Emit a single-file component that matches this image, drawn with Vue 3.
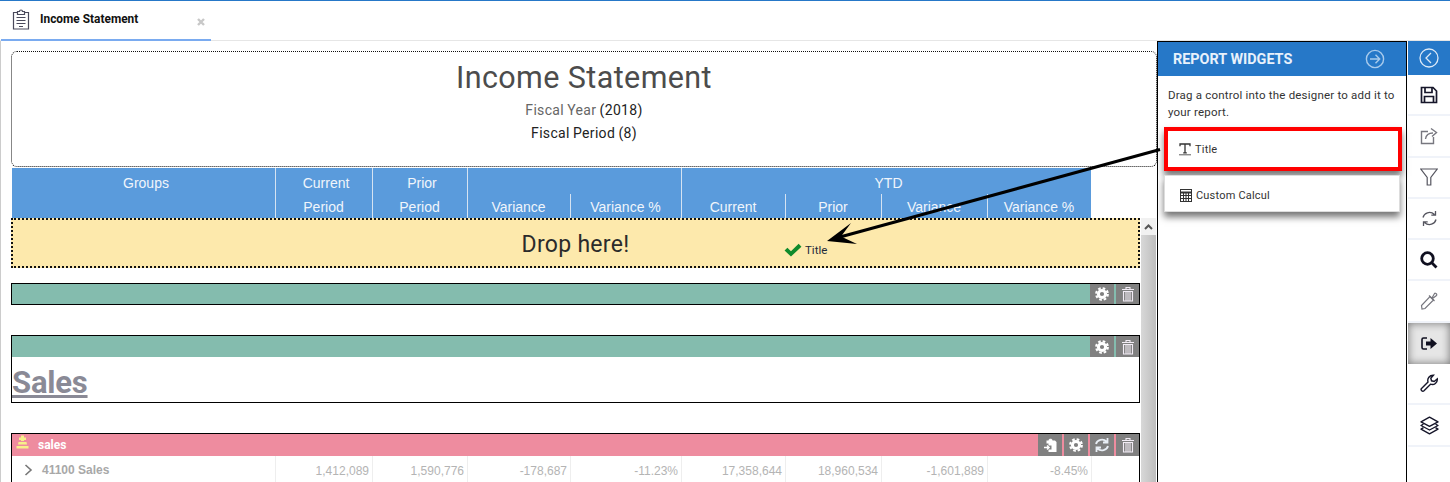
<template>
  <div class="page">
    <div class="tabbar">
      <div class="tab">
        <svg class="tab-icon" width="18" height="21" viewBox="0 0 18 21" fill="none" stroke="#4a4a5c" stroke-width="1.2">
          <path d="M5.5 3.5H1.5V20H16.5V3.5H12.5" />
          <path d="M5.5 5.5V2.5H7.5C7.5 0.5 10.5 0.5 10.5 2.5H12.5V5.5Z" />
          <path d="M4.5 8.5H13.5M4.5 11.5H13.5M4.5 14.5H13.5M7 17.5H11" />
        </svg>
        <span class="tab-name">Income Statement</span>
        <svg class="tab-close" width="8" height="8" viewBox="0 0 8 8" fill="none" stroke="#c8c8c8" stroke-width="2.4">
          <path d="M1 1L7 7M7 1L1 7" />
        </svg>
      </div>
    </div>

    <div class="body">
      <div class="canvas">
        <div class="title-box">
          <div class="title-main">Income Statement</div>
          <div class="title-sub"><span class="muted">Fiscal Year</span> (2018)</div>
          <div class="title-sub">Fiscal Period (8)</div>
        </div>

        <div class="grid head">
          <div class="head-top first">Groups</div>
          <div class="head-top">Current</div>
          <div class="head-top">Prior</div>
          <div class="head-top wide"></div>
          <div class="head-top ytd">YTD</div>
          <div class="head-sub first"></div>
          <div v-for="c in subCols" :key="c.id" class="head-sub">{{ c.label }}</div>
        </div>

        <div class="work">
          <div class="work-main">
            <div class="drop">Drop here!</div>

            <div class="section first-bar">
              <div class="bar green">
                <div class="actions">
                  <button class="act"><svg width="16" height="16" viewBox="0 0 16 16"><use href="#gear" /></svg></button>
                  <button class="act"><svg width="16" height="16" viewBox="0 0 16 16"><use href="#trash" /></svg></button>
                </div>
              </div>
            </div>

            <div class="section title-sec">
              <div class="bar green">
                <div class="actions">
                  <button class="act"><svg width="16" height="16" viewBox="0 0 16 16"><use href="#gear" /></svg></button>
                  <button class="act"><svg width="16" height="16" viewBox="0 0 16 16"><use href="#trash" /></svg></button>
                </div>
              </div>
              <div class="sales-title">Sales</div>
            </div>

            <div class="section group-sec">
              <div class="bar pink">
                <svg class="crown" width="13" height="14" viewBox="0 0 13 14" fill="#f7f08a">
                  <path d="M5 0.5H8V2.5H10V5H8V6H5V5H3V2.5H5Z" />
                  <path d="M2.5 7H10.5L11 9.5H2Z" />
                  <path d="M0.5 11H12.5V13.5H0.5Z" />
                </svg>
                <span class="bar-name">sales</span>
                <div class="actions">
                  <button class="act"><svg width="16" height="16" viewBox="0 0 16 16"><use href="#clip" /></svg></button>
                  <button class="act"><svg width="16" height="16" viewBox="0 0 16 16"><use href="#gear" /></svg></button>
                  <button class="act"><svg width="16" height="16" viewBox="0 0 16 16"><use href="#sync" /></svg></button>
                  <button class="act"><svg width="16" height="16" viewBox="0 0 16 16"><use href="#trash" /></svg></button>
                </div>
              </div>
              <div class="grid row">
                <div class="cell name">
                  <svg width="9" height="12" viewBox="0 0 9 12" fill="none" stroke="#777" stroke-width="1.6"><path d="M1.5 1L7 6L1.5 11" /></svg>
                  41100 Sales
                </div>
                <div v-for="v in rowValues" :key="v" class="cell num">{{ v }}</div>
              </div>
            </div>
          </div>

          <div class="scrollbar">
            <div class="scroll-up">
              <svg width="9" height="6" viewBox="0 0 9 6" fill="none" stroke="#555" stroke-width="2"><path d="M1 5L4.5 1.5L8 5" /></svg>
            </div>
            <div class="scroll-thumb"></div>
          </div>
        </div>
      </div>

      <div class="panel">
        <div class="panel-head">
          <span>REPORT WIDGETS</span>
          <svg width="20" height="20" viewBox="0 0 20 20" fill="none" stroke="#a9cbec" stroke-width="1.4">
            <circle cx="10" cy="10" r="8.6" />
            <path d="M5 10H14.5M10.5 5.8L14.7 10L10.5 14.2" />
          </svg>
        </div>
        <p class="panel-text">Drag a control into the designer to add it to your report.</p>
        <div class="widget selected">
          <svg width="12" height="13" viewBox="0 0 12 13" fill="none" stroke="#333" stroke-width="1.3">
            <path d="M1 3.2V1H11V3.2M6 1V9.8M4.2 9.8H7.8" />
            <path d="M0 11.8H12" stroke-width="0.8" />
          </svg>
          Title
        </div>
        <div class="widget calc">
          <svg width="12" height="13" viewBox="0 0 12 13" fill="none" stroke="#333" stroke-width="1">
            <rect x="0.5" y="0.5" width="11" height="12" />
            <path d="M0.5 3.5H11.5" stroke-width="2" />
            <path d="M0.5 6.5H11.5M0.5 9.5H11.5M3.5 4V12.5M6 4V12.5M8.5 4V12.5" />
          </svg>
          Custom Calcul
        </div>
      </div>

      <div class="rail">
        <div class="rail-top">
          <svg width="20" height="20" viewBox="0 0 20 20" fill="none" stroke="#dce9f7" stroke-width="1.3">
            <circle cx="10" cy="10" r="9" />
            <path d="M12 5L7 10L12 15" />
          </svg>
        </div>
        <div class="rail-item">
          <svg width="18" height="18" viewBox="0 0 18 18" fill="none" stroke="#16162a" stroke-width="1.7">
            <path d="M1.5 1.5H13L16.5 5V16.5H1.5Z" />
            <path d="M5 1.5V6.5H12V1.5M4.5 16.5V10.5H13.5V16.5" />
          </svg>
        </div>
        <div class="rail-item">
          <svg width="18" height="18" viewBox="0 0 18 18" fill="none" stroke="#77777f" stroke-width="1.4">
            <path d="M8 4.5H1.5V16.5H13.5V10" />
            <path d="M5.5 12C6 8 9 6 13 6M11 1.5L16.5 5.5L12 9.5" />
          </svg>
        </div>
        <div class="rail-item">
          <svg width="18" height="18" viewBox="0 0 18 18" fill="none" stroke="#55555f" stroke-width="1.2">
            <path d="M0.8 1H17.2L10.8 9.5V17H7.2V9.5Z" />
          </svg>
        </div>
        <div class="rail-item">
          <svg width="17" height="17" viewBox="0 0 17 17" fill="none" stroke="#55555f" stroke-width="1.3">
            <path d="M2 7.5C3 3 9 0.5 13.5 4.5M14.5 1V5.2H10.3" />
            <path d="M15 9.5C14 14 8 16.5 3.5 12.5M2.5 16V11.8H6.7" />
          </svg>
        </div>
        <div class="rail-item">
          <svg width="18" height="18" viewBox="0 0 18 18" fill="none" stroke="#101020" stroke-width="2.8">
            <circle cx="7.5" cy="7.5" r="5.8" />
            <path d="M11.8 11.8L16.5 16.5" />
          </svg>
        </div>
        <div class="rail-item">
          <svg width="18" height="18" viewBox="0 0 18 18" fill="none" stroke="#77777f" stroke-width="1.2">
            <path d="M10 4.5L13.5 8L5 16.5L2 17L1.5 13.5Z" />
            <path d="M9 3.5L14.5 9M12 6L14.5 1.5C15.5 0.5 17.5 2.5 16.5 3.5L12.5 6.5" />
          </svg>
        </div>
        <div class="rail-item active">
          <svg width="17" height="13" viewBox="0 0 17 13">
            <path d="M6 1H2.5C1.5 1 1 1.5 1 2.5V10.5C1 11.5 1.5 12 2.5 12H6" fill="none" stroke="#101020" stroke-width="1.6" />
            <path d="M5 4.5H9.5V1L16 6.5L9.5 12V8.5H5Z" fill="#101020" />
          </svg>
        </div>
        <div class="rail-item">
          <svg width="19" height="19" viewBox="0 0 19 19" fill="none" stroke="#16162a" stroke-width="1.4">
            <path d="M1.5 14.5L8 8C7 4.5 9.5 1 13.5 1.2L10.8 4.2L11.5 6.8L14.2 7.5L17.3 4.8C17.8 8.8 14 11.5 10.5 10.2L4 16.8C2.5 18.2 0.2 16 1.5 14.5Z" />
          </svg>
        </div>
        <div class="rail-item">
          <svg width="19" height="19" viewBox="0 0 19 19" fill="none" stroke="#16162a" stroke-width="1.4" stroke-linejoin="round">
            <path d="M9.5 1.2L18 5.8L9.5 10.4L1 5.8Z" />
            <path d="M3.5 8L1 9.5L9.5 14L18 9.5L15.5 8" />
            <path d="M3.5 11.7L1 13.2L9.5 17.8L18 13.2L15.5 11.7" />
          </svg>
        </div>
      </div>
    </div>

    <!-- drag ghost and arrow, drawn over the page -->
    <div class="ghost">
      <svg width="18" height="14" viewBox="0 0 16 12" fill="#0f8a2c"><path d="M0.5 6.5L3 4L6.2 7L13 0.5L15.5 3L6.2 11.8Z" /></svg>
      <span>Title</span>
    </div>
    <svg class="arrow" width="1450" height="482" viewBox="0 0 1450 482">
      <path d="M1160 149.5L840 237" stroke="#000" stroke-width="3" fill="none" />
      <path d="M827 241L851 223L841 236.5L857 244Z" fill="#000" />
    </svg>

    <svg width="0" height="0" class="defs">
      <defs>
        <g id="gear" fill="none" stroke="#fff">
          <circle cx="8" cy="8" r="3.6" stroke-width="3" />
          <circle cx="8" cy="8" r="5.8" stroke-width="2.2" stroke-dasharray="2.6 1.95" />
        </g>
        <g id="trash" fill="none" stroke="#f2ecf5" stroke-width="1.1">
          <path d="M2 3.5H14M6 3.5V1.5H10V3.5" />
          <path d="M3.5 5.5H12.5V15H3.5Z" />
          <path d="M6 6V15M8 6V15M10 6V15" />
        </g>
        <g id="sync" fill="none" stroke="#e8eef5" stroke-width="1.8">
          <path d="M2 7C3 3 9 1 12.5 4.5M13.5 1V5.5H9" />
          <path d="M14 9C13 13 7 15 3.5 11.5M2.5 15V10.5H7" />
        </g>
        <g id="clip">
          <path d="M4.5 3.5H6.5C6.5 1 10.5 1 10.5 3.5H13L14.5 5V15H6.5V12.5H9.5V8.5H6.5V6.5H4.5Z" fill="#fff" />
          <path d="M2 10.5H6.5M5 8.5L7.2 10.5L5 12.5" fill="none" stroke="#fff" stroke-width="1.3" />
        </g>
      </defs>
    </svg>
  </div>
</template>

<script setup>
const subCols = [
  { id: 'p1', label: 'Period' },
  { id: 'p2', label: 'Period' },
  { id: 'v1', label: 'Variance' },
  { id: 'vp1', label: 'Variance %' },
  { id: 'c2', label: 'Current' },
  { id: 'p3', label: 'Prior' },
  { id: 'v2', label: 'Variance' },
  { id: 'vp2', label: 'Variance %' }
]

const rowValues = [
  '1,412,089',
  '1,590,776',
  '-178,687',
  '-11.23%',
  '17,358,644',
  '18,960,534',
  '-1,601,889',
  '-8.45%'
]
</script>

<style>
html,
body {
  margin: 0;
  background: #fff;
}
</style>

<style scoped>
.page {
  position: relative;
  width: 1450px;
  height: 482px;
  overflow: hidden;
  background: #fff;
  font-family: Roboto, sans-serif;
  color: #333;
}

.tabbar {
  height: 41px;
  box-sizing: border-box;
  border-top: 1px solid #2678c8;
  border-bottom: 1px solid #e6e6e6;
}

.tab {
  width: 210px;
  height: 40px;
  margin-left: 1px;
  box-sizing: border-box;
  border-bottom: 2px solid #7aabf0;
  display: flex;
  align-items: flex-start;
  padding: 8px 0 0 11px;
}

.tab-name {
  margin: 3px 0 0 10px;
  font-size: 11.9px;
  font-weight: 700;
  color: #111;
  line-height: 14px;
}

.tab-close {
  margin: 9px 6px 0 auto;
}

.body {
  display: flex;
  height: 441px;
}

.canvas {
  width: 1157px;
  flex: none;
  box-sizing: border-box;
  padding: 10px 0 0 10px;
  border-left: 1px solid #ccc;
}

.title-box {
  height: 116px;
  box-sizing: border-box;
  border: 1px dotted #111;
  border-radius: 6px;
  text-align: center;
  padding-top: 6px;
}

.title-main {
  font-size: 30.5px;
  line-height: 40px;
  letter-spacing: 0.4px;
  color: #4c4c4c;
}

.title-sub {
  font-size: 14px;
  line-height: 23px;
  letter-spacing: 0.32px;
  word-spacing: -0.5px;
  color: #222;
}

.title-main + .title-sub {
  margin-top: 1px;
}

.muted {
  color: #666;
}

.grid {
  display: grid;
  grid-template-columns: 263px 97px 95px 103px 111px 104px 96px 106px 104px;
}

.head {
  height: 50px;
  margin: 1px 0 0 1px;
  width: 1079px;
  background: #5a9bdc;
  color: #f0f5fb;
  font-family: 'Liberation Sans', sans-serif;
  font-size: 14px;
  text-align: center;
  grid-template-rows: 26px 24px;
}

.head-top {
  line-height: 30px;
  padding-left: 5px;
  box-shadow: inset 1px 0 0 #d5e3f2;
}

.head-sub {
  line-height: 26px;
  box-shadow: inset 1px 0 0 #d5e3f2;
}

.head-top.first,
.head-sub.first {
  box-shadow: none;
}

.head-top.wide {
  grid-column: span 2;
}

.head-top.ytd {
  grid-column: span 4;
}

.work {
  display: flex;
  height: 264px;
}

.work-main {
  width: 1129px;
  flex: none;
}

.drop {
  height: 50px;
  box-sizing: border-box;
  border: 2px dotted #111;
  background: #fde9ac;
  text-align: center;
  font-size: 23px;
  line-height: 50px;
  letter-spacing: 0.3px;
  color: #2b2b2b;
}

.section {
  box-sizing: border-box;
  border: 1px solid #000;
}

.first-bar {
  margin-top: 15px;
  height: 22px;
}

.title-sec {
  margin-top: 30px;
  height: 68px;
}

.group-sec {
  margin-top: 30px;
  border-bottom: 0;
}

.bar {
  display: flex;
  align-items: stretch;
  height: 21px;
}

.first-bar .bar {
  height: 20px;
}

.group-sec .bar {
  height: 22px;
}

.green {
  background: #84bcae;
}

.pink {
  background: #ee8c9f;
}

.crown {
  margin: 1px 0 0 4px;
}

.bar-name {
  margin-left: 9px;
  font-size: 12px;
  font-weight: 700;
  line-height: 23px;
  color: #fff;
}

.actions {
  margin-left: auto;
  display: flex;
  gap: 2px;
}

.act {
  width: 23px;
  padding: 0;
  border: 0;
  background: #808080;
  display: flex;
  align-items: center;
  justify-content: center;
}

.act:nth-last-child(n + 2) {
  width: 24px;
}

.sales-title {
  font-size: 31px;
  font-weight: 700;
  line-height: 51px;
  color: #8a8a96;
  text-decoration: underline;
  letter-spacing: -0.2px;
}

.row {
  padding-left: 1px;
  font-family: 'Liberation Sans', sans-serif;
  font-size: 12px;
  height: 26px;
}

.cell {
  line-height: 30px;
  border-right: 1px solid #eee;
}

.cell.name {
  display: flex;
  align-items: center;
  gap: 9px;
  height: 26px;
  padding: 2px 0 0 11px;
  box-sizing: border-box;
  line-height: 24px;
  font-weight: 700;
  color: #a8a8a8;
}

.cell.num {
  text-align: right;
  padding-right: 3px;
  color: #b4b4b4;
}

.scrollbar {
  width: 15px;
  margin-left: 1px;
  display: flex;
  flex-direction: column;
}

.scroll-up {
  height: 17px;
  background: #f1f1f1;
  display: flex;
  align-items: center;
  justify-content: center;
}

.scroll-thumb {
  flex: 1;
  background: linear-gradient(90deg, #d8d8d8, #bdbdbd);
}

.panel {
  width: 250px;
  flex: none;
  box-sizing: border-box;
  border: 1px solid #000;
  border-width: 1px 1px 0;
}

.panel-head {
  height: 34px;
  background: #2678c8;
  color: #e8f1fb;
  font-size: 14.4px;
  font-weight: 700;
  display: flex;
  align-items: center;
  justify-content: space-between;
  padding: 0 21px 0 15px;
}

.panel-text {
  margin: 11px 0 0;
  padding: 0 10px;
  font-size: 11.5px;
  line-height: 17px;
  letter-spacing: 0.2px;
  color: #333;
}

.widget {
  width: 236px;
  height: 37px;
  box-sizing: border-box;
  margin: 4px 0 0 6px;
  border: 1px solid #ddd;
  box-shadow: 0 5px 7px rgba(0, 0, 0, 0.55);
  display: flex;
  align-items: center;
  gap: 4px;
  padding-left: 14px;
  font-size: 11px;
  letter-spacing: 0.2px;
  color: #333;
  background: #fff;
}

.widget.calc {
  padding: 3px 0 0 15px;
}

.widget.selected {
  width: 238px;
  height: 44px;
  margin-top: 6px;
  border: 4px solid #f00;
  padding: 1px 0 0 11px;
}

.rail {
  flex: 1;
  margin-left: 1px;
  display: flex;
  flex-direction: column;
}

.rail-top {
  height: 34px;
  background: #2678c8;
  display: flex;
  align-items: center;
  justify-content: center;
}

.rail-item {
  height: 41.3px;
  box-sizing: border-box;
  border-bottom: 2px solid #f0f3f9;
  flex: none;
  display: flex;
  align-items: center;
  justify-content: center;
}

.rail-item.active {
  background: #e6e6e6;
  box-shadow: inset 0 0 8px rgba(0, 0, 0, 0.5);
  border-bottom: 0;
}

.ghost {
  position: absolute;
  left: 784px;
  top: 243px;
  display: flex;
  align-items: center;
  gap: 3px;
  font-size: 11.5px;
  color: #1e2a3a;
}

.arrow {
  position: absolute;
  left: 0;
  top: 0;
  pointer-events: none;
}

.defs {
  position: absolute;
}
</style>
